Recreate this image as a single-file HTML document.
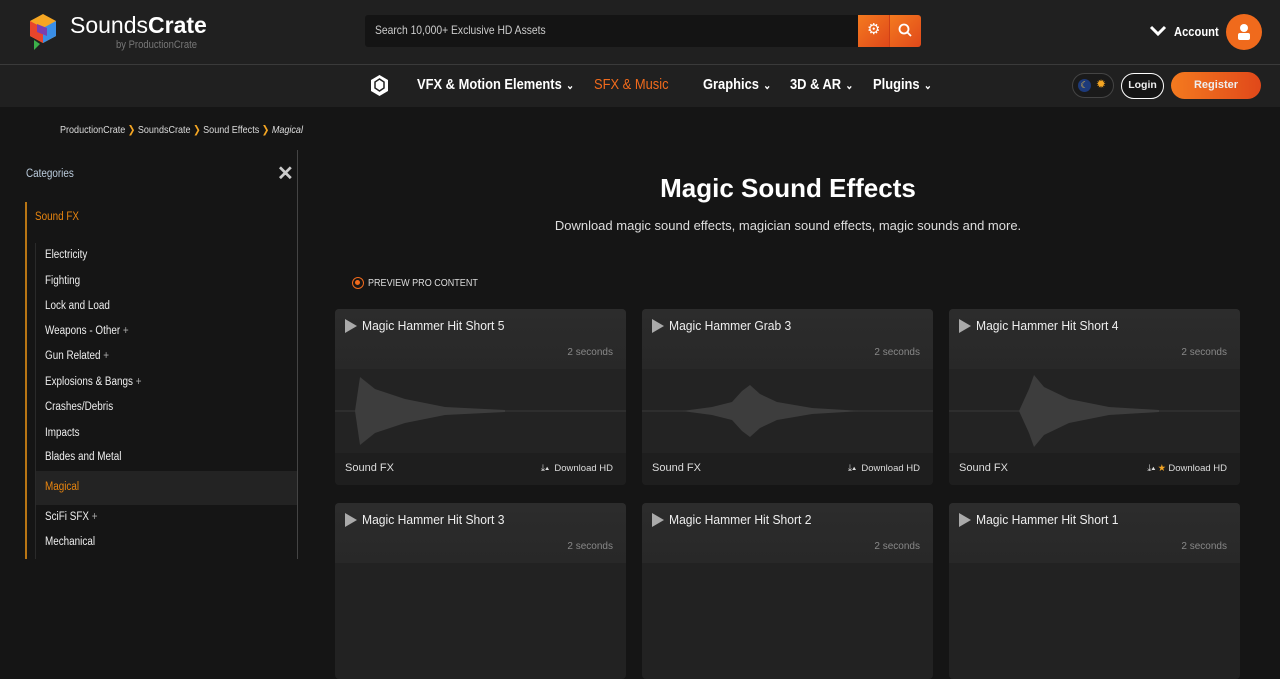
<!DOCTYPE html>
<html><head><meta charset="utf-8"><style>
*{box-sizing:border-box;margin:0;padding:0}
body{width:1280px;height:559px;overflow:hidden;background:#151515;font-family:"Liberation Sans",sans-serif;color:#eee;position:relative}
.abs{position:absolute}
.n{display:inline-block;transform:scaleX(.86);transform-origin:left center;white-space:nowrap}
.top{left:0;top:0;width:1280px;height:65px;background:#202020;border-bottom:1px solid #3a3a3a}
.nav{left:0;top:65px;width:1280px;height:42px;background:#202020}
.search{left:365px;top:15px;width:494px;height:32px;background:#141414;border-radius:3px 0 0 3px;font-size:12px;color:#ccc;padding:8px 10px}
.sbtn{top:15px;height:32px;background:linear-gradient(135deg,#f47a1f,#e0481a)}
.navi{top:76px;font-size:15px;font-weight:bold;color:#fff}
.chev{font-size:11px;margin-left:5px}
.cat{left:45px;font-size:11.5px;color:#eee}
.card{width:291px;height:176px;border-radius:4px;background:#222;overflow:hidden}
.card .hd{height:60px;background:linear-gradient(180deg,#2c2c2c,#282828)}
.card .t{position:absolute;left:27px;top:9px;font-size:13px;color:#eee}
.card .pl{position:absolute;left:10px;top:10px;width:0;height:0;border-left:12px solid #aaa;border-top:7px solid transparent;border-bottom:7px solid transparent}
.card .s{position:absolute;right:13px;top:38px;font-size:10px;color:#888}
.card .wv{position:absolute;left:0;top:60px;width:291px;height:84px;background:#232323}
.card .ft{position:absolute;left:0;top:144px;width:291px;height:32px;background:#1e1e1e}
.card .sf{position:absolute;left:10px;top:153px;font-size:11px;color:#ddd}
.card .dl{position:absolute;right:13px;top:154px;font-size:9.5px;color:#ddd}
</style></head><body>
<div class="abs top"></div>
<div class="abs nav"></div>
<svg class="abs" style="left:28px;top:14px" width="30" height="36" viewBox="0 0 30 36"><polygon points="15,0 28,7 28,22 15,29 2,22 2,7" fill="#f5a623"/><polygon points="2,7 15,14 15,29 2,22" fill="#e8452c"/><polygon points="15,14 28,7 28,22 15,29" fill="#3a8ee6"/><polygon points="9,10 19,14 19,22 9,18" fill="#7b3fb0"/><polygon points="6,26 12,30 6,36" fill="#3cb04a"/></svg>
<div class="abs" style="left:70px;top:12px;font-size:23px;color:#fff">Sounds<b>Crate</b></div>
<div class="abs" style="left:116px;top:39px;font-size:11px;color:#777"><span class="n">by ProductionCrate</span></div>
<div class="abs search"><span class="n">Search 10,000+ Exclusive HD Assets</span></div>
<div class="abs sbtn" style="left:858px;width:32px;border-right:1px solid #d04016"><span class="abs" style="left:9px;top:5px;font-size:15px;color:#fff">⚙</span></div>
<div class="abs sbtn" style="left:890px;width:31px;border-radius:0 3px 3px 0"><svg class="abs" style="left:8px;top:8px" width="15" height="15"><circle cx="6" cy="6" r="4.5" stroke="#fff" stroke-width="1.8" fill="none"/><line x1="9.5" y1="9.5" x2="13" y2="13" stroke="#fff" stroke-width="1.8"/></svg></div>
<svg class="abs" style="left:1149px;top:24px" width="18" height="14"><polyline points="2,3 9,10 16,3" stroke="#fff" stroke-width="3" fill="none"/></svg>
<div class="abs" style="left:1174px;top:24px;font-size:13px;font-weight:bold;color:#fff"><span class="n">Account</span></div>
<div class="abs" style="left:1226px;top:14px;width:36px;height:36px;border-radius:50%;background:#f06a1c"><svg class="abs" style="left:11px;top:9px" width="14" height="18"><circle cx="7" cy="5" r="4" fill="#fff"/><rect x="1" y="10" width="12" height="7" rx="2" fill="#fff"/></svg></div>
<svg class="abs" style="left:370px;top:74px" width="19" height="24"><polygon points="9.5,1 18,6 18,17 9.5,22 1,17 1,6" fill="#fff"/><polygon points="9.5,5 14,8 14,14 9.5,17 5,14 5,8" fill="none" stroke="#222" stroke-width="1.5"/></svg>
<div class="abs navi" style="left:417px"><span class="n">VFX &amp; Motion Elements<span class="chev">⌄</span></span></div>
<div class="abs navi" style="left:594px;color:#f06a1c;font-weight:normal"><span class="n">SFX &amp; Music</span></div>
<div class="abs navi" style="left:703px"><span class="n">Graphics<span class="chev">⌄</span></span></div>
<div class="abs navi" style="left:790px"><span class="n">3D &amp; AR<span class="chev">⌄</span></span></div>
<div class="abs navi" style="left:873px"><span class="n">Plugins<span class="chev">⌄</span></span></div>
<div class="abs" style="left:1072px;top:73px;width:42px;height:25px;border-radius:13px;border:1px solid #444;background:#1a1a1a"><div class="abs" style="left:5px;top:5px;width:13px;height:13px;border-radius:50%;background:#1d3a7a;color:#f5c542;font-size:9px;text-align:center;line-height:13px">☾</div><div class="abs" style="left:23px;top:3px;color:#f5a623;font-size:12px">✹</div></div>
<div class="abs" style="left:1121px;top:73px;width:43px;height:26px;border-radius:13px;border:1.5px solid #fff;font-size:10.5px;font-weight:bold;text-align:center;line-height:23px;background:#151515">Login</div>
<div class="abs" style="left:1171px;top:72px;width:90px;height:27px;border-radius:14px;background:linear-gradient(90deg,#f47a1f,#e0481a);font-size:11px;font-weight:bold;text-align:center;line-height:27px">Register</div>

<div class="abs" style="left:60px;top:124px;font-size:10.5px;color:#ddd"><span class="n">ProductionCrate <span style="color:#f5a623">❯</span> SoundsCrate <span style="color:#f5a623">❯</span> Sound Effects <span style="color:#f5a623">❯</span> <i>Magical</i></span></div>

<div class="abs" style="left:297px;top:150px;width:1px;height:409px;background:#444"></div>
<div class="abs" style="left:26px;top:168px;font-size:11.5px;color:#bcd"><span class="n">Categories</span></div>
<div class="abs" style="left:277px;top:161px;font-size:20px;color:#ccc;font-weight:bold">✕</div>
<div class="abs" style="left:25px;top:202px;width:2px;height:357px;background:#b87514"></div>
<div class="abs" style="left:35px;top:211px;font-size:11.5px;color:#e8850f"><span class="n">Sound FX</span></div>
<div class="abs" style="left:35px;top:243px;width:1px;height:316px;background:#2a2a2a"></div>
<div class="abs" style="left:36px;top:471px;width:261px;height:34px;background:#232323"></div>
<div class="abs cat" style="top:249px"><span class="n">Electricity</span></div>
<div class="abs cat" style="top:275px"><span class="n">Fighting</span></div>
<div class="abs cat" style="top:300px"><span class="n">Lock and Load</span></div>
<div class="abs cat" style="top:325px"><span class="n">Weapons - Other <span style="color:#aaa">+</span></span></div>
<div class="abs cat" style="top:350px"><span class="n">Gun Related <span style="color:#aaa">+</span></span></div>
<div class="abs cat" style="top:376px"><span class="n">Explosions &amp; Bangs <span style="color:#aaa">+</span></span></div>
<div class="abs cat" style="top:401px"><span class="n">Crashes/Debris</span></div>
<div class="abs cat" style="top:427px"><span class="n">Impacts</span></div>
<div class="abs cat" style="top:451px"><span class="n">Blades and Metal</span></div>
<div class="abs cat" style="top:481px;color:#e8850f"><span class="n">Magical</span></div>
<div class="abs cat" style="top:511px"><span class="n">SciFi SFX <span style="color:#aaa">+</span></span></div>
<div class="abs cat" style="top:536px"><span class="n">Mechanical</span></div>

<div class="abs" style="left:0;top:173px;width:1576px;text-align:center;font-size:26px;font-weight:bold;color:#fff">Magic Sound Effects</div>
<div class="abs" style="left:0;top:218px;width:1576px;text-align:center;font-size:13px;color:#ddd">Download magic sound effects, magician sound effects, magic sounds and more.</div>
<div class="abs" style="left:352px;top:277px;width:12px;height:12px;border-radius:50%;border:1.5px solid #f06a1c"><div class="abs" style="left:2px;top:2px;width:5px;height:5px;border-radius:50%;background:#f06a1c"></div></div>
<div class="abs" style="left:368px;top:277px;font-size:10.5px;color:#ddd"><span class="n">PREVIEW PRO CONTENT</span></div>

<div class="abs card" style="left:335px;top:309px"><div class="hd"></div><div class="pl"></div><div class="t"><span class="n" style="transform:scaleX(.93)">Magic Hammer Hit Short 5</span></div><div class="s">2 seconds</div><div class="wv"><svg width="291" height="84"><line x1="0" y1="42" x2="291" y2="42" stroke="#3a3a3a"/><path d="M20,42 L25,8 L40,20 L70,30 L110,38 L170,41 L170,43 L110,46 L70,54 L40,64 L25,76 Z" fill="#3d3d3d"/></svg></div><div class="ft"></div><div class="sf">Sound FX</div><div class="dl">⤓▴ &nbsp;Download HD</div></div>
<div class="abs card" style="left:642px;top:309px"><div class="hd"></div><div class="pl"></div><div class="t"><span class="n" style="transform:scaleX(.93)">Magic Hammer Grab 3</span></div><div class="s">2 seconds</div><div class="wv"><svg width="291" height="84"><line x1="0" y1="42" x2="291" y2="42" stroke="#3a3a3a"/><path d="M40,42 L70,38 L90,33 L100,22 L108,16 L118,25 L135,33 L170,39 L220,42 L170,45 L135,51 L118,59 L108,68 L100,62 L90,51 L70,46 Z" fill="#3d3d3d"/></svg></div><div class="ft"></div><div class="sf">Sound FX</div><div class="dl">⤓▴ &nbsp;Download HD</div></div>
<div class="abs card" style="left:949px;top:309px"><div class="hd"></div><div class="pl"></div><div class="t"><span class="n" style="transform:scaleX(.93)">Magic Hammer Hit Short 4</span></div><div class="s">2 seconds</div><div class="wv"><svg width="291" height="84"><line x1="0" y1="42" x2="291" y2="42" stroke="#3a3a3a"/><path d="M70,42 L80,20 L85,6 L95,18 L120,30 L160,38 L210,41 L210,43 L160,46 L120,54 L95,66 L85,78 L80,64 Z" fill="#3d3d3d"/></svg></div><div class="ft"></div><div class="sf">Sound FX</div><div class="dl">⤓▴ <span style="color:#f5a623">★</span> Download HD</div></div>
<div class="abs card" style="left:335px;top:503px"><div class="hd"></div><div class="pl"></div><div class="t"><span class="n" style="transform:scaleX(.93)">Magic Hammer Hit Short 3</span></div><div class="s">2 seconds</div></div>
<div class="abs card" style="left:642px;top:503px"><div class="hd"></div><div class="pl"></div><div class="t"><span class="n" style="transform:scaleX(.93)">Magic Hammer Hit Short 2</span></div><div class="s">2 seconds</div></div>
<div class="abs card" style="left:949px;top:503px"><div class="hd"></div><div class="pl"></div><div class="t"><span class="n" style="transform:scaleX(.93)">Magic Hammer Hit Short 1</span></div><div class="s">2 seconds</div></div>
</body></html>
